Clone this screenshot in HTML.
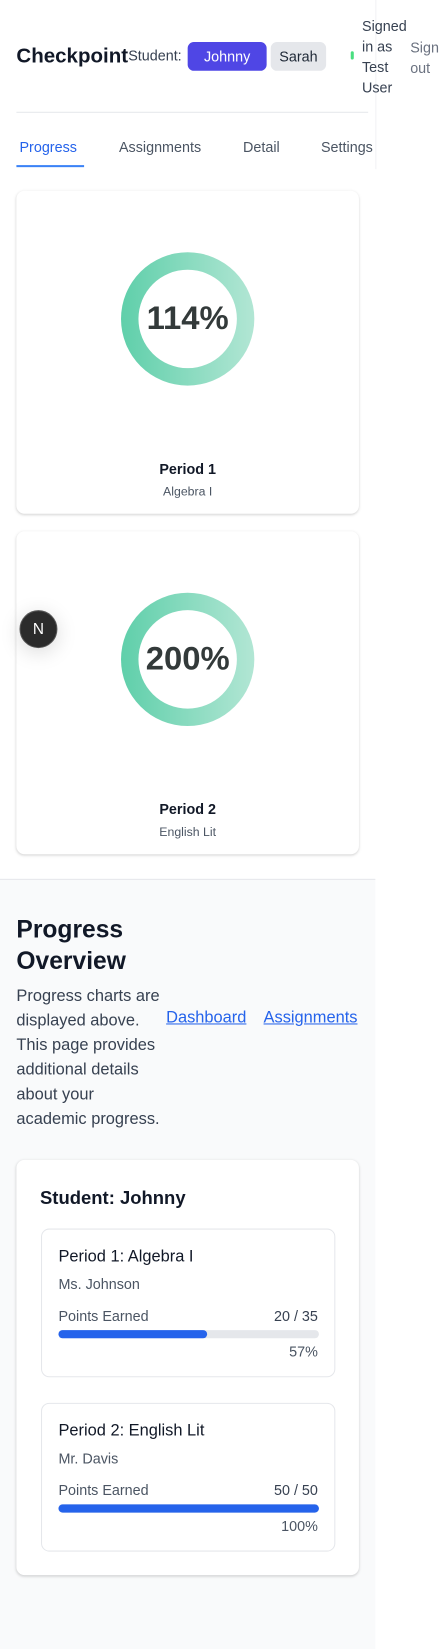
<!DOCTYPE html>
<html><head><style>
*{margin:0;padding:0;box-sizing:border-box}
html,body{width:439px;height:1608px;overflow:hidden;background:#fff}
#w{position:absolute;left:0;top:0;width:428px;height:1568px;transform:scale(1.0255);transform-origin:0 0;font-family:"Liberation Sans",sans-serif;color:#111827}
.a{position:absolute;white-space:nowrap}
.card{position:absolute;background:#fff;border-radius:8px;box-shadow:0 1px 3px rgba(0,0,0,.12),0 1px 2px rgba(0,0,0,.06)}
.ring{position:absolute;width:130px;height:130px;border-radius:50%;background:linear-gradient(90deg,#5fcfaa,#b2e6d4)}
.ring:after{content:"";position:absolute;left:17px;top:17px;width:96px;height:96px;border-radius:50%;background:#fff}
.ring span{position:absolute;left:-20px;right:-20px;top:46px;text-align:center;font-weight:bold;font-size:32px;color:#333a3a;z-index:1}
.inner{position:absolute;left:40px;width:287px;height:145px;border:1px solid #e5e7eb;border-radius:8px;background:#fff}
.bar{position:absolute;left:16px;width:254px;height:8px;border-radius:4px;background:#e5e7eb;top:98px}
.bar i{display:block;height:8px;border-radius:4px;background:#2563eb}
</style></head><body><div id="w">
<div class="a" style="left:366px;top:0;width:1px;height:165px;background:#f1f2f4"></div>
<div class="a" style="left:16px;top:44px;font-size:20px;font-weight:bold">Checkpoint</div>
<div class="a" style="left:125px;top:46px;font-size:14px;color:#374151">Student:</div>
<div class="a" style="left:183px;top:41px;width:77px;height:28px;border-radius:6px;background:#4f46e5;color:#fff;font-size:14px;text-align:center;line-height:28px">Johnny</div>
<div class="a" style="left:264px;top:41px;width:54px;height:28px;border-radius:6px;background:#e5e7eb;color:#1f2937;font-size:14px;text-align:center;line-height:28px">Sarah</div>
<div class="a" style="left:342px;top:50px;width:3px;height:8px;border-radius:2px;background:#4ade80"></div>
<div class="a" style="left:353px;top:15px;font-size:14px;line-height:20px;color:#374151">Signed<br>in as<br>Test<br>User</div>
<div class="a" style="left:400px;top:36px;font-size:14px;line-height:20px;color:#6b7280">Sign<br>out</div>
<div class="a" style="left:16px;top:109px;width:343px;height:1px;background:#e5e7eb"></div>
<div class="a" style="left:19px;top:135px;font-size:14px;color:#2563eb">Progress</div>
<div class="a" style="left:116px;top:135px;font-size:14px;color:#4b5563">Assignments</div>
<div class="a" style="left:237px;top:135px;font-size:14px;color:#4b5563">Detail</div>
<div class="a" style="left:313px;top:135px;font-size:14px;color:#4b5563">Settings</div>
<div class="a" style="left:16px;top:161px;width:66px;height:2px;background:#3b82f6"></div>

<div class="card" style="left:16px;top:186px;width:334px;height:315px">
<div class="ring" style="left:102px;top:60px"><span>114%</span></div>
<div class="a" style="left:0;right:0;top:263px;text-align:center;font-size:14px;font-weight:bold">Period 1</div>
<div class="a" style="left:0;right:0;top:286px;text-align:center;font-size:12px;color:#4b5563">Algebra I</div>
</div>
<div class="card" style="left:16px;top:518px;width:334px;height:315px">
<div class="ring" style="left:102px;top:60px"><span>200%</span></div>
<div class="a" style="left:0;right:0;top:263px;text-align:center;font-size:14px;font-weight:bold">Period 2</div>
<div class="a" style="left:0;right:0;top:286px;text-align:center;font-size:12px;color:#4b5563">English Lit</div>
</div>
<div class="a" style="left:19px;top:595px;width:37px;height:37px;border-radius:50%;background:#2b2b2b;border:1px solid #555;box-shadow:0 4px 20px rgba(0,0,0,.15);color:#fff;font-size:15px;text-align:center;line-height:35px">N</div>

<div class="a" style="left:0;top:857px;width:366px;height:751px;background:#f9fafb;border-top:1px solid #e5e7eb"></div>
<div class="a" style="left:16px;top:891px;font-size:24px;font-weight:bold;line-height:31px">Progress<br>Overview</div>
<div class="a" style="left:16px;top:960px;font-size:16px;line-height:24px;color:#374151">Progress charts are<br>displayed above.<br>This page provides<br>additional details<br>about your<br>academic progress.</div>
<div class="a" style="left:162px;top:984px;font-size:16px;color:#2563eb;text-decoration:underline">Dashboard</div>
<div class="a" style="left:257px;top:984px;font-size:16px;color:#2563eb;text-decoration:underline">Assignments</div>

<div class="card" style="left:16px;top:1131px;width:334px;height:405px">
<div class="a" style="left:23px;top:27px;font-size:18px;font-weight:bold">Student: Johnny</div>
</div>
<div class="inner" style="top:1198px">
<div class="a" style="left:16px;top:18px;font-size:16px">Period 1: Algebra I</div>
<div class="a" style="left:16px;top:45px;font-size:14px;color:#4b5563">Ms. Johnson</div>
<div class="a" style="left:16px;top:76px;font-size:14px;color:#4b5563">Points Earned</div>
<div class="a" style="right:16px;top:76px;font-size:14px;color:#374151">20 / 35</div>
<div class="bar"><i style="width:57%"></i></div>
<div class="a" style="right:16px;top:111px;font-size:14px;color:#4b5563">57%</div>
</div>
<div class="inner" style="top:1368px">
<div class="a" style="left:16px;top:18px;font-size:16px">Period 2: English Lit</div>
<div class="a" style="left:16px;top:45px;font-size:14px;color:#4b5563">Mr. Davis</div>
<div class="a" style="left:16px;top:76px;font-size:14px;color:#4b5563">Points Earned</div>
<div class="a" style="right:16px;top:76px;font-size:14px;color:#374151">50 / 50</div>
<div class="bar"><i style="width:100%"></i></div>
<div class="a" style="right:16px;top:111px;font-size:14px;color:#4b5563">100%</div>
</div>
</div></body></html>
